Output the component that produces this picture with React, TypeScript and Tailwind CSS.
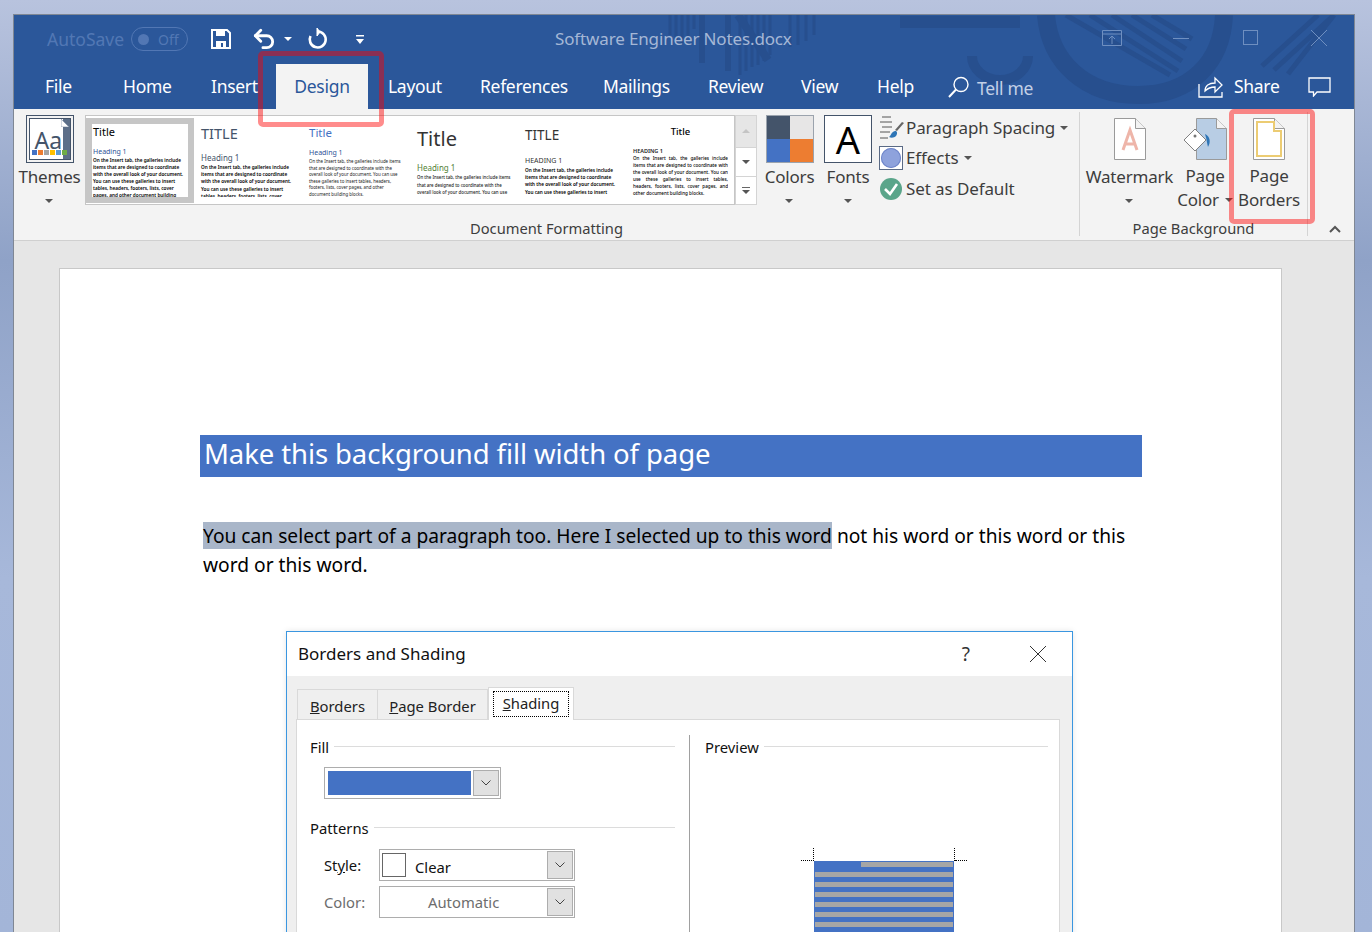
import { Undo2 } from "lucide-react";

const tabs = [
  { label: "File", width: "w-[78px]" },
  { label: "Home", width: "w-[88px]" },
  { label: "Insert", width: "w-[65px]" },
];

const tabsAfter = [
  { label: "Layout", width: "w-[92px]" },
  { label: "References", width: "w-[123px]" },
  { label: "Mailings", width: "w-[105px]" },
  { label: "Review", width: "w-[93px]" },
  { label: "View", width: "w-[76px]" },
  { label: "Help", width: "w-[71px]" },
];

const lorem =
  "On the Insert tab, the galleries include items that are designed to coordinate with the overall look of your document. You can use these galleries to insert tables, headers, footers, lists, cover pages, and other document building blocks.";

function Caret({ className = "" }: { className?: string }) {
  return (
    <svg width="8" height="4" viewBox="0 0 8 4" className={className}>
      <path d="M0 0h8L4 4z" fill="#555" />
    </svg>
  );
}

function TitleArt() {
  return (
    <svg
      width="1340"
      height="94"
      viewBox="14 15 1340 94"
      className="absolute left-0 top-0"
      fill="none"
    >
      <g stroke="#274f8e">
        <path d="M670 15v20M676 15v25M682 15v28M688 15v22M694 15v14" strokeWidth="3" />
        <path d="M702 15v48M728 15v56" strokeWidth="6" />
        <path d="M740 15v60M746 15v56M752 15v52M758 15v50M764 15v46M770 15v40" strokeWidth="3" />
        <path d="M738 15l30 45" strokeWidth="8" />
        <path d="M790 15v32M798 15v30M806 15v26M814 15v20" strokeWidth="3" />
        <path d="M900 22h120" strokeWidth="12" />
        <path d="M972 56a28 24 0 0 0 56 0" strokeWidth="10" />
        <path d="M1046 15c4 48 40 80 92 80 54 0 84-34 86-80" strokeWidth="18" />
        <path d="M1066 15l104 60M1090 15l88 56M1112 15l70 46M1132 15l54 34M1152 15l40 24" strokeWidth="5" />
        <path d="M1262 66l56-51M1274 70l60-55M1288 74l46-59" strokeWidth="5" />
      </g>
    </svg>
  );
}

function TitleBar() {
  return (
    <div className="relative flex h-[49px] items-center pb-[1px] pl-[33px]">
      <span className="text-[17.5px] text-[#5277b4]">AutoSave</span>
      <div className="ml-[7px] flex h-[24px] w-[57px] items-center rounded-full border border-[#5277b4] pl-[6px]">
        <span className="h-[11px] w-[11px] rounded-full bg-[#5277b4]" />
        <span className="ml-[9px] text-[14px] text-[#5277b4]">Off</span>
      </div>
      <svg width="20" height="20" viewBox="0 0 20 20" className="ml-[23px]">
        <path d="M1 1h15l3 3v15H1z" fill="none" stroke="#fff" strokeWidth="2" />
        <path d="M5 1h9v6H5z" fill="#fff" />
        <path d="M5 12h10v7H5z" fill="#fff" />
        <path d="M10 14h2v4h-2z" fill="#2b579a" />
      </svg>
      <Undo2 size={26} strokeWidth={2.6} color="#fff" className="ml-[20px]" />
      <svg width="8" height="4" viewBox="0 0 8 4" className="ml-[7px]">
        <path d="M0 0h8L4 4z" fill="#fff" />
      </svg>
      <svg width="22" height="22" viewBox="0 0 22 22" fill="none" className="ml-[14px]">
        <path d="M12 3.500a8 8 0 1 1-7.500 4.500" stroke="#fff" strokeWidth="2.6" />
        <path d="M11 0v8l3-4z" fill="#fff" stroke="#fff" strokeWidth="1" />
      </svg>
      <svg width="8" height="9" viewBox="0 0 8 9" className="ml-[28px]">
        <path d="M0 0h8v1.500H0zM0 4h8L4 9z" fill="#fff" />
      </svg>
      <span className="absolute left-[541px] top-[11px] text-[17px] tracking-[-0.14px] text-[#a5b7d6]">
        Software Engineer Notes.docx
      </span>
      <svg
        width="20"
        height="16"
        viewBox="0 0 20 16"
        fill="none"
        stroke="#6f8fc0"
        className="absolute left-[1088px] top-[15px]"
      >
        <path d="M.5.5h19v15H.5zM.5 4h19M10 14V6M7 9l3-3 3 3" />
      </svg>
      <span className="absolute left-[1159px] top-[23px] h-[1px] w-[16px] bg-[#6f8fc0]" />
      <span className="absolute left-[1229px] top-[15px] h-[15px] w-[15px] border border-[#6f8fc0]" />
      <svg
        width="16"
        height="16"
        viewBox="0 0 16 16"
        stroke="#6f8fc0"
        className="absolute left-[1297px] top-[15px]"
      >
        <path d="M0 0l16 16M16 0L0 16" />
      </svg>
    </div>
  );
}

function TabRow() {
  return (
    <div className="relative flex h-[45px] items-center whitespace-nowrap pl-[31px] text-[17.5px] tracking-[-0.3px] text-white">
      {tabs.map((t) => (
        <span key={t.label} className={`shrink-0 ${t.width}`}>
          {t.label}
        </span>
      ))}
      <div className="flex h-full w-[92px] shrink-0 items-center justify-center bg-[#f3f3f3] text-[#2b579a]">
        Design
      </div>
      <span className="w-[20px] shrink-0" />
      {tabsAfter.map((t) => (
        <span key={t.label} className={`shrink-0 ${t.width}`}>
          {t.label}
        </span>
      ))}
      <svg width="22" height="22" viewBox="0 0 22 22" fill="none" stroke="#fff" strokeWidth="1.4" className="shrink-0">
        <circle cx="13" cy="8.500" r="7" />
        <path d="M8 13.500L1 21" strokeWidth="2" />
      </svg>
      <span className="ml-[7px] mt-[3px] w-[221px] shrink-0 text-[#c3d0e6]">Tell me</span>
      <svg width="26" height="22" viewBox="0 0 26 22" fill="none" stroke="#fff" strokeWidth="1.3" className="shrink-0">
        <path d="M1 8v13h23v-5" />
        <path d="M7 15c0-5 4-8 10-8V2l7 7-7 7v-5c-4 0-7 1-10 4z" />
      </svg>
      <span className="ml-[10px] w-[74px] shrink-0">Share</span>
      <svg width="23" height="20" viewBox="0 0 23 20" fill="none" stroke="#fff" strokeWidth="1.3" className="shrink-0">
        <path d="M1 1h21v14H9l-3.500 4v-4H1z" />
      </svg>
    </div>
  );
}

type CardProps = {
  title: string;
  titleCls: string;
  heading: string;
  headCls: string;
  bodyCls: string;
  selected?: boolean;
};

function StyleCard({ title, titleCls, heading, headCls, bodyCls, selected }: CardProps) {
  return (
    <div
      className={`h-[85px] w-[108px] shrink-0 overflow-hidden border-[6px] ${
        selected ? "border-[#c6c6c6]" : "border-transparent"
      }`}
    >
      <div className="h-full overflow-hidden pl-[1px]">
        <p className={titleCls}>{title}</p>
        <p className={headCls}>{heading}</p>
        <p className={bodyCls}>{lorem}</p>
      </div>
    </div>
  );
}

function Gallery() {
  return (
    <div className="flex h-[90px] w-[672px] shrink-0">
      <div className="flex h-full w-[650px] border border-[#c6c6c6] bg-white pt-[2px]">
        <StyleCard
          selected
          title="Title"
          titleCls="text-[11px] leading-[16px] text-black"
          heading="Heading 1"
          headCls="mt-[7px] text-[7px] leading-[10px] text-[#2f5496]"
          bodyCls="text-[4.7px] font-semibold leading-[7.1px] text-black"
        />
        <StyleCard
          title="TITLE"
          titleCls="mt-[-1px] text-[14.5px] leading-[20px] text-[#44546a]"
          heading="Heading 1"
          headCls="mt-[9px] text-[8px] leading-[12px] text-[#44546a]"
          bodyCls="text-[4.7px] font-semibold leading-[7.2px] text-black"
        />
        <StyleCard
          title="Title"
          titleCls="text-[11.5px] leading-[18px] text-[#4472c4]"
          heading="Heading 1"
          headCls="mt-[6px] text-[7px] leading-[10px] text-[#2f5496]"
          bodyCls="text-[4.4px] leading-[6.5px] text-[#222]"
        />
        <StyleCard
          title="Title"
          titleCls="mt-[1px] text-[20px] leading-[28px] text-[#333]"
          heading="Heading 1"
          headCls="mt-[9px] text-[8px] leading-[12px] text-[#538135]"
          bodyCls="text-[4.4px] font-medium leading-[7.5px] text-[#222]"
        />
        <StyleCard
          title="TITLE"
          titleCls="mt-[1px] text-[13.5px] leading-[20px] text-[#333]"
          heading="HEADING 1"
          headCls="mt-[10px] text-[7px] leading-[12px] text-[#333]"
          bodyCls="text-[4.7px] font-semibold leading-[7.2px] text-black"
        />
        <StyleCard
          title="Title"
          titleCls="mt-[1px] text-center text-[9.5px] font-medium leading-[14px] text-black"
          heading="HEADING 1"
          headCls="mt-[8px] text-[5.5px] font-semibold leading-[8px] text-[#222]"
          bodyCls="text-justify text-[4.6px] font-medium leading-[6.9px] text-black"
        />
      </div>
      <div className="flex w-[22px] flex-col">
        <div className="flex h-[33px] items-center justify-center border border-[#d4d4d4] bg-[#e6e6e6]">
          <svg width="8" height="4" viewBox="0 0 8 4">
            <path d="M0 4h8L4 0z" fill="#c4c4c4" />
          </svg>
        </div>
        <div className="flex h-[29px] items-center justify-center border-x border-[#d4d4d4] bg-white">
          <Caret />
        </div>
        <div className="flex h-[29px] flex-col items-center justify-center gap-[2px] border border-[#d4d4d4] bg-white">
          <span className="h-[1px] w-[8px] bg-[#666]" />
          <Caret />
        </div>
      </div>
    </div>
  );
}

function ThemesIcon() {
  return (
    <div className="relative h-[48px] w-[48px] border border-[#44546a] p-[2px]">
      <div className="relative h-full w-full overflow-hidden border border-[#44546a] bg-white">
        <span className="absolute right-0 top-0 h-full w-[7px] bg-[#5d6f89]" />
        <svg width="8" height="8" viewBox="0 0 8 8" className="absolute right-[1px] top-0">
          <path d="M0 0l8 8H0z" fill="#fff" stroke="#8696ac" strokeWidth="0.7" />
        </svg>
        <span className="absolute left-[5px] top-[6px] text-[23px] leading-[30px] text-[#44546a]">Aa</span>
        <div className="absolute bottom-[4px] left-[2px] flex">
          {["#4472c4", "#ed7d31", "#a5a5a5", "#ffc000", "#5b9bd5", "#70ad47"].map((c) => (
            <span key={c} className="mr-[1px] h-[5px] w-[5px]" style={{ backgroundColor: c }} />
          ))}
        </div>
      </div>
    </div>
  );
}

function BigButton({
  icon,
  width,
  lines,
  caret = true,
  trailing = false,
}: {
  icon: React.ReactNode;
  width: string;
  lines: string[];
  caret?: boolean;
  trailing?: boolean;
}) {
  return (
    <div className={`flex shrink-0 flex-col items-center ${width}`}>
      <div className="flex h-[48px] items-center justify-center">{icon}</div>
      <div className="mt-[2px] flex flex-col items-center text-center text-[17px] leading-[24px] tracking-[-0.2px] text-[#3d3d3d]">
        {lines.map((l, i) => (
          <span key={l} className="flex items-center whitespace-nowrap">
            {l}
            {trailing && i === lines.length - 1 && <Caret className="ml-[6px]" />}
          </span>
        ))}
        {caret && <Caret className="mt-[10px]" />}
      </div>
    </div>
  );
}

function DocIcon({ children }: { children?: React.ReactNode }) {
  return (
    <svg width="32" height="42" viewBox="0 0 32 42" fill="none">
      <path d="M.5.5h21l10 10v31H.5z" fill="#fff" stroke="#9a9a9a" />
      <path d="M21.500.5v10h10" fill="#f3f3f3" stroke="#9a9a9a" />
      {children}
    </svg>
  );
}

function ParagraphOptions() {
  return (
    <div className="ml-[3px] flex w-[198px] shrink-0 flex-col whitespace-nowrap text-[17px] tracking-[-0.1px] text-[#3d3d3d]">
      <div className="flex h-[26px] items-center">
        <svg width="25" height="24" viewBox="0 0 25 24" fill="none" className="ml-[1px] shrink-0">
          <path d="M2 1h9M0 6h12M2 11h10M0 16h10M0 22h8" stroke="#555" />
          <path d="M24 7l-7 8-2-1 7-8z" fill="#666" />
          <path d="M15 15c2 0 3 2 1 5-2 2-5 2-7 1 2-1 2-5 6-6z" fill="#2e75b6" />
        </svg>
        <span className="ml-[1px]">Paragraph Spacing</span>
        <Caret className="ml-[5px]" />
      </div>
      <div className="flex h-[34px] items-center">
        <div className="flex h-[24px] w-[24px] items-center justify-center border border-[#5a6a85] bg-white">
          <span className="h-[20px] w-[20px] rounded-full bg-[#8ea2dc] shadow-[inset_0_0_0_1px_#6f86c9]" />
        </div>
        <span className="ml-[3px]">Effects</span>
        <Caret className="ml-[6px]" />
      </div>
      <div className="flex h-[28px] items-center">
        <svg width="22" height="22" viewBox="0 0 22 22" fill="none" className="ml-[1px]">
          <circle cx="11" cy="11" r="11" fill="#5aa58a" />
          <path d="M5 11l5 5 7-10" stroke="#fff" strokeWidth="2.6" />
        </svg>
        <span className="ml-[4px]">Set as Default</span>
      </div>
    </div>
  );
}

function Ribbon() {
  return (
    <div className="flex h-[132px] border-b border-[#d0d0d0] bg-[#f3f3f3]">
      <div className="flex w-[1065px] shrink-0 flex-col">
        <div className="flex h-[103px] pt-[6px]">
          <BigButton width="w-[71px]" lines={["Themes"]} icon={<ThemesIcon />} />
          <Gallery />
          <BigButton
            width="w-[61px] ml-[2px]"
            lines={["Colors"]}
            icon={
              <div className="grid h-[48px] w-[48px] grid-cols-2 grid-rows-2 border border-[#9ba3ad]">
                <span className="bg-[#44546a]" />
                <span className="bg-[#e7e6e6]" />
                <span className="bg-[#4472c4]" />
                <span className="bg-[#ed7d31]" />
              </div>
            }
          />
          <BigButton
            width="w-[56px]"
            lines={["Fonts"]}
            icon={
              <div className="flex h-[48px] w-[48px] items-center justify-center border border-[#44546a] bg-white text-[38px] text-black">
                A
              </div>
            }
          />
          <ParagraphOptions />
        </div>
        <p className="mt-auto pb-[1px] text-center text-[14.7px] leading-[22px] text-[#3d3d3d]">
          Document Formatting
        </p>
      </div>
      <div className="mb-[4px] mt-[3px] w-[1px] bg-[#d4d4d4]" />
      <div className="flex w-[227px] shrink-0 flex-col">
        <div className="flex h-[103px] pt-[6px]">
          <BigButton
            width="w-[99px]"
            lines={["Watermark"]}
            icon={
              <DocIcon>
                <path d="M9 32l7-20 7 20M11 26h10" stroke="#eeb5a9" strokeWidth="3" />
              </DocIcon>
            }
          />
          <BigButton
            width="w-[52px]"
            caret={false}
            trailing
            lines={["Page", "Color"]}
            icon={
              <svg width="44" height="42" viewBox="0 0 44 42" fill="none">
                <path d="M13.500.5h20l10 10v31h-30z" fill="#b8cde4" stroke="#9a9a9a" />
                <path d="M33.500.5v10h10" fill="#f3f3f3" stroke="#9a9a9a" />
                <path d="M1 22l11-11 11 11-11 11z" fill="#fff" stroke="#808080" />
                <circle cx="12" cy="18" r="1.500" fill="#777" />
                <path d="M22 16c5 2 6 8 3 13-1-3-1-7-3-13z" fill="#2e75b6" />
              </svg>
            }
          />
          <BigButton
            width="w-[76px]"
            caret={false}
            lines={["Page", "Borders"]}
            icon={
              <DocIcon>
                <path d="M4 4h17v9h7v25H4z" stroke="#eccc73" strokeWidth="2" />
              </DocIcon>
            }
          />
        </div>
        <p className="mt-auto pb-[1px] text-center text-[14.7px] leading-[22px] text-[#3d3d3d]">
          Page Background
        </p>
      </div>
      <div className="mb-[4px] mt-[3px] w-[1px] bg-[#d4d4d4]" />
      <div className="flex flex-1 items-end justify-end pb-[7px] pr-[13px]">
        <svg width="12" height="8" viewBox="0 0 12 8" fill="none" stroke="#555" strokeWidth="2">
          <path d="M1 7l5-5 5 5" />
        </svg>
      </div>
    </div>
  );
}

function Chevron() {
  return (
    <svg width="10" height="6" viewBox="0 0 10 6" fill="none" stroke="#444" strokeWidth="1">
      <path d="M.5.5L5 5 9.500.5" />
    </svg>
  );
}

function SelectButton({ className = "" }: { className?: string }) {
  return (
    <div className={`flex w-[26px] items-center justify-center border border-[#adadad] bg-[#e1e1e1] ${className}`}>
      <Chevron />
    </div>
  );
}

function Fieldset({ title, className = "" }: { title: string; className?: string }) {
  return (
    <div className={`flex items-center gap-[5px] ${className}`}>
      <span className="text-[14.8px] leading-[22px] text-[#111]">{title}</span>
      <span className="mt-[-1px] h-[1px] flex-1 bg-[#dcdcdc]" />
    </div>
  );
}

function DialogTabs() {
  return (
    <div className="relative z-10 mb-[-1px] ml-[1px] flex h-[33px] items-end pt-[1px] text-[14.8px] text-[#222]">
      <div className="flex h-[31px] w-[80px] items-center justify-center border-l border-t border-[#d9d9d9] pt-[3px]">
        <span><u>B</u>orders</span>
      </div>
      <div className="flex h-[31px] w-[111px] items-center justify-center border-x border-t border-[#d9d9d9] pt-[3px]">
        <span><u>P</u>age Border</span>
      </div>
      <div className="flex h-[33px] w-[86px] items-center justify-center border-x border-t border-[#d9d9d9] bg-white px-[4px] pb-[2px] pt-[1px]">
        <div className="flex h-[26px] w-full items-center justify-center border border-dotted border-black">
          <span><u>S</u>hading</span>
        </div>
      </div>
    </div>
  );
}

function PreviewStripes() {
  const rows = [0, 1, 2, 3, 4, 5, 6, 7];
  return (
    <div className="relative ml-[109px] mt-[103px] h-[72px] w-[140px]">
      <span className="absolute -left-[1px] -top-[13px] h-[13px] border-l border-dotted border-black" />
      <span className="absolute -left-[13px] -top-[1px] w-[13px] border-t border-dotted border-black" />
      <span className="absolute -right-[1px] -top-[13px] h-[13px] border-l border-dotted border-black" />
      <span className="absolute -right-[13px] -top-[1px] w-[12px] border-t border-dotted border-black" />
      <div className="flex h-full flex-col gap-[5px] overflow-hidden bg-[#4472c4] px-[1px] pt-[1px]">
        {rows.map((r) => (
          <div key={r} className={`h-[5px] shrink-0 bg-[#a6a6a6] ${r === 0 ? "ml-[46px]" : ""}`} />
        ))}
      </div>
    </div>
  );
}

function Dialog() {
  return (
    <div className="absolute left-[226px] top-[362px] h-[320px] w-[787px] overflow-hidden border border-b-0 border-[#3a96e0] bg-[#efefef] shadow-[0_0_6px_rgba(0,0,0,0.1)]">
      <div className="flex h-[44px] items-center bg-white pl-[11px] text-[17px] text-[#111]">
        <span>Borders and Shading</span>
        <span className="ml-auto mr-[60px] text-[19px] text-[#333]">?</span>
        <svg width="16" height="16" viewBox="0 0 16 16" stroke="#333" className="mr-[26px]">
          <path d="M0 0l16 16M16 0L0 16" />
        </svg>
      </div>
      <div className="pl-[9px] pr-[12px] pt-[11px]">
        <DialogTabs />
        <div className="flex h-[250px] border border-[#d9d9d9] bg-white">
          <div className="w-[392px] shrink-0 pl-[13px] pr-[14px] pt-[16px]">
            <Fieldset title="Fill" />
            <div className="ml-[14px] mt-[9px] flex h-[32px] w-[177px] border border-[#adadad] p-[3px] pr-[1px]">
              <span className="h-[24px] w-[143px] bg-[#4472c4]" />
              <SelectButton className="-mt-[1px] ml-[2px] h-[26px]" />
            </div>
            <Fieldset title="Patterns" className="mt-[18px]" />
            <div className="mt-[10px] flex items-center">
              <span className="ml-[14px] w-[55px] text-[14.8px] text-[#111]">
                St<u>y</u>le:
              </span>
              <div className="flex h-[32px] w-[196px] items-center border border-[#adadad] pl-[2px] pr-[1px]">
                <span className="h-[24px] w-[24px] border border-[#666]" />
                <span className="ml-[9px] mt-[5px] text-[14.8px] text-[#111]">Clear</span>
                <SelectButton className="ml-auto h-[28px]" />
              </div>
            </div>
            <div className="mt-[5px] flex items-center">
              <span className="ml-[14px] w-[55px] text-[14.8px] text-[#6d6d6d]">Color:</span>
              <div className="flex h-[32px] w-[196px] items-center border border-[#adadad] pr-[1px]">
                <span className="ml-[48px] text-[14.8px] text-[#6d6d6d]">Automatic</span>
                <SelectButton className="ml-auto h-[28px]" />
              </div>
            </div>
          </div>
          <div className="mt-[15px] w-[1px] bg-[#a0a0a0]" />
          <div className="flex-1 pl-[15px] pr-[11px] pt-[16px]">
            <Fieldset title="Preview" />
            <PreviewStripes />
          </div>
        </div>
      </div>
    </div>
  );
}

function Page() {
  return (
    <div className="relative h-[700px] w-[1223px] border border-[#c8c8c8] bg-white pl-[140px] pr-[139px] pt-[166px]">
      <h1 className="flex h-[42px] items-center bg-[#4472c4] pb-[4px] pl-[4px] text-[27.5px] tracking-[-0.1px] text-white">
        Make this background fill width of page
      </h1>
      <p className="mt-[44px] pl-[3px] text-[19.2px] leading-[29px] text-black">
        <span className="bg-[#a9b6c9]">You can select part of a paragraph too. Here I selected up to this word</span>{" "}
        not his word or this word or this word or this word.
      </p>
      <Dialog />
    </div>
  );
}

export default function App() {
  return (
    <div className="h-[932px] w-[1372px] overflow-hidden bg-[linear-gradient(180deg,#b8c3de_0%,#8fa2c7_28%,#a7b8da_62%,#a3b5d8_100%)] pl-[13px] pr-[17px] pt-[14px] font-['Noto_Sans',sans-serif]">
      <div className="h-[918px] overflow-hidden border-x border-t border-[#7f8794] bg-[#e6e6e6]">
        <div className="relative bg-[#2b579a]">
          <TitleArt />
          <TitleBar />
          <TabRow />
        </div>
        <Ribbon />
        <div className="pl-[45px] pt-[27px]">
          <Page />
        </div>
      </div>
      {/* red callouts drawn over the ribbon */}
      <div className="absolute left-[258px] top-[51px] h-[76px] w-[126px] rounded-[5px] border-[5px] border-[#ff000073]" />
      <div className="absolute left-[1229px] top-[109px] h-[115px] w-[86px] rounded-[5px] border-[5px] border-[#ff000073]" />
    </div>
  );
}
